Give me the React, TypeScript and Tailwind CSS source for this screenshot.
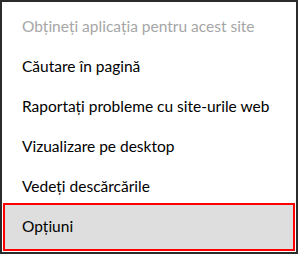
const items = [
  'Căutare în pagină',
  'Raportați probleme cu site-urile web',
  'Vizualizare pe desktop',
  'Vedeți descărcările',
];

export default function App() {
  return (
    <div
      className="w-[298px] h-[254px] border-2 border-[#2b2b2b] bg-white flex flex-col pt-[5px] text-[15.5px] leading-none text-black"
      style={{ fontFamily: 'Lato, "Noto Sans", sans-serif' }}
    >
      <div className="h-10 shrink-0 flex items-center pl-[20px] text-[#a6a6a6]">
        Obțineți aplicația pentru acest site
      </div>
      {items.map((label) => (
        <div key={label} className="h-10 shrink-0 flex items-center pl-[20px]">
          {label}
        </div>
      ))}
      <div className="relative -mt-[4px] mx-px h-[48px] shrink-0 flex items-center pl-[17px] border-2 border-[#ff0000] bg-[#dedede]">
        Opțiuni
      </div>
    </div>
  );
}
